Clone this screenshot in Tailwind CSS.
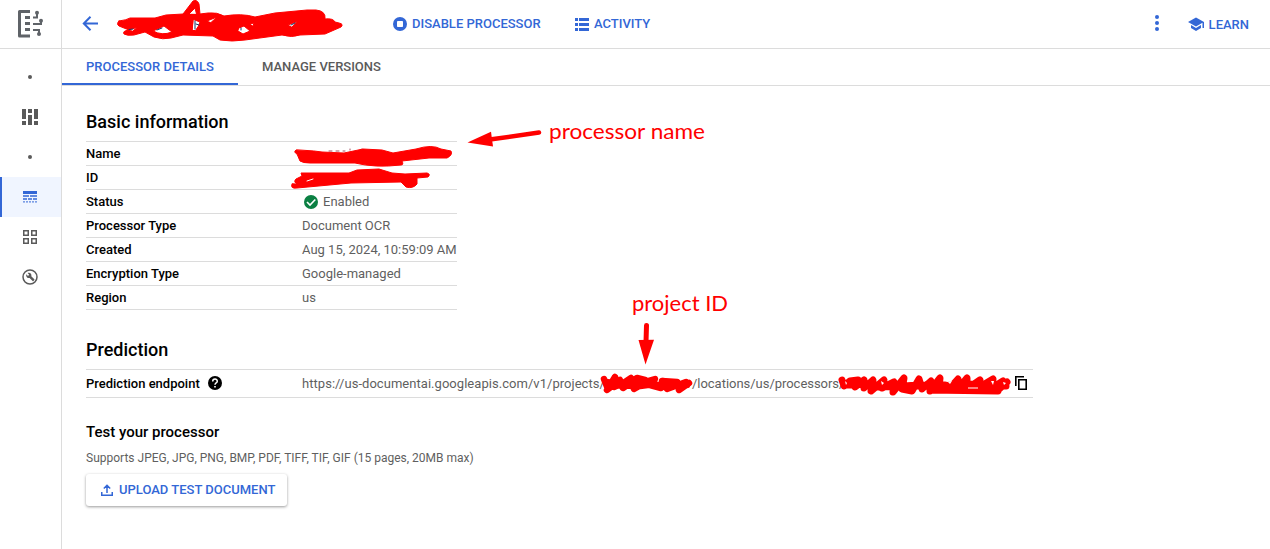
<!DOCTYPE html>
<html lang="en">
<head>
<meta charset="utf-8">
<title>Processor details</title>
<script src="https://cdn.jsdelivr.net/npm/@tailwindcss/browser@4"></script>
</head>
<body class="relative h-[549px] w-[1270px] overflow-hidden bg-white font-['Roboto',sans-serif] text-[13px] text-black">
<div class="flex h-full">
  <nav class="flex w-[62px] shrink-0 flex-col border-r border-[#dcdcdc]">
    <div class="flex h-[49px] shrink-0 items-center border-b border-[#dcdcdc] pl-[17px]">
      <svg class="h-[30px] w-[28px]" viewBox="17 9 28 30" fill="none" stroke="#5f6368"><path d="M30 11.5H19.500V36H30" stroke-width="3" stroke-linejoin="round"/><path d="M25 17.500h5M25 23.500h5M25 29.500h5" stroke-width="3"/><path d="M33 17.500h4v-5M33 24h8v-3M33 30h6v4" stroke-width="2"/><g fill="#5f6368" stroke="none"><circle cx="37" cy="12.800" r="2"/><circle cx="41" cy="20.800" r="2"/><circle cx="39" cy="34" r="2"/></g></svg>
    </div>
    <div class="flex flex-col pt-2">
      <div class="flex h-10 items-center justify-center pr-[1px]"><span class="size-1 rounded-full bg-[#5a5a5a]"></span></div>
      <div class="flex h-10 items-center justify-center pr-[1px]"><svg class="size-4" viewBox="0 0 16 16" fill="#5a5a5a"><path d="M0 0h4v10H0zM0 12h4v4H0zM6 0h4v4H6zM6 6h4v10H6zM12 0h4v10h-4zM12 12h4v4h-4z"/></svg></div>
      <div class="flex h-10 items-center justify-center pr-[1px]"><span class="size-1 rounded-full bg-[#5a5a5a]"></span></div>
      <div class="flex h-10 items-center justify-center border-l-2 border-[#3367d6] bg-[#f0f5ff] pr-[3px]"><svg class="h-3 w-[14px]" viewBox="0 0 14 12" fill="#3367d6"><path d="M0 0h14v3H0z"/><path d="M0 4.200h6v1.600H0zM7 4.200h7v1.600H7zM0 7.200h4v1.600H0zM5 7.200h4v1.600H5zM10 7.200h4v1.600h-4z"/><path d="M0 10.200h2v1.400H0zM3 10.200h2v1.400H3zM6 10.200h2v1.400H6zM9 10.200h2v1.400H9zM12 10.200h2v1.400h-2z" opacity=".8"/></svg></div>
      <div class="flex h-10 items-center justify-center pr-[1px]"><svg class="size-[14px]" viewBox="0 0 14 14" fill="none" stroke="#5a5a5a" stroke-width="1.500"><path d="M.75.750h4.500v4.500H.75zM8.750.750h4.500v4.500h-4.500zM.75 8.750h4.500v4.500H.75zM8.750 8.750h4.500v4.500h-4.500z"/></svg></div>
      <div class="flex h-10 items-center justify-center pr-[1px]"><svg class="size-4" viewBox="0 0 16 16"><circle cx="8" cy="8" r="7" fill="none" stroke="#5a5a5a" stroke-width="1.500"/><path fill="#5a5a5a" d="M4.300 5.300l1.700 1.600L7.200 5.700 5.600 4.100c1.300-.5 2.600-.2 3.300.7.600.8.700 1.600.4 2.500l3 3c.3.300.2.600 0 .8l-.8.800c-.3.300-.6.300-.9 0l-3-3c-.8.300-1.800.2-2.500-.5-.8-.8-1.100-2-.8-3.100z"/></svg></div>
    </div>
  </nav>
  <main class="flex min-w-0 flex-1 flex-col">
    <header class="flex h-[49px] shrink-0 items-center border-b border-[#dcdcdc] text-[13px] font-medium text-[#3367d6]">
      <svg class="ml-5 size-4" viewBox="0 0 16 16" fill="none" stroke="#3367d6" stroke-width="2"><path d="M16 7.500H2M8.500.800L1.800 7.500l6.700 6.700"/></svg>
      <svg class="ml-[295px] size-[14px]" viewBox="0 0 14 14"><circle cx="7" cy="7" r="7" fill="#3367d6"/><rect x="4" y="4" width="6" height="6" rx=".8" fill="#fff"/></svg>
      <span class="ml-[5px] w-[129px] whitespace-nowrap">DISABLE PROCESSOR</span>
      <svg class="ml-[34px] h-[13px] w-[14px]" viewBox="0 0 14 13" fill="#3367d6"><path d="M0 0h3v3H0zM4 0h10v3H4zM0 5h3v3H0zM4 5h10v3H4zM0 10h3v3H0zM4 10h10v3H4z"/></svg>
      <span class="ml-[5px] whitespace-nowrap">ACTIVITY</span>
      <svg class="mt-[-2px] ml-auto h-4 w-1" viewBox="0 0 4 16" fill="#3367d6"><circle cx="2" cy="2" r="2"/><circle cx="2" cy="8" r="2"/><circle cx="2" cy="14" r="2"/></svg>
      <svg class="ml-[29px] h-[14px] w-4" viewBox="0 0 16 14" fill="#3367d6"><path d="M8 .500L0 5l8 4.500 6.500-3.700V11H16V5z"/><path d="M3 8v3l5 3 5-3V8l-5 3z"/></svg>
      <span class="mr-[21px] ml-[5px] whitespace-nowrap pt-px">LEARN</span>
    </header>
    <div class="flex h-[37px] shrink-0 border-b border-[#dcdcdc] font-medium">
      <div class="-mb-px flex h-[36px] w-[176px] items-center justify-center border-b-2 border-[#3367d6] pt-[2px] text-[#3367d6]">PROCESSOR DETAILS</div>
      <div class="flex h-[36px] items-center pl-6 text-[#5a5a5a]">MANAGE VERSIONS</div>
    </div>
    <div class="pl-6">
      <h2 class="mt-6 h-[31px] text-[18px] leading-6 font-medium">Basic information</h2>
      <dl class="w-[371px] border-b border-[#dcdcdc] leading-[23px] text-[#5f5f5f] [&_dt]:w-[216px] [&_dt]:shrink-0 [&_dt]:font-medium [&_dt]:text-black [&_dd]:whitespace-nowrap">
        <div class="flex h-6 border-t border-[#dcdcdc]"><dt>Name</dt><dd></dd></div>
        <div class="flex h-6 border-t border-[#dcdcdc]"><dt>ID</dt><dd></dd></div>
        <div class="flex h-6 border-t border-[#dcdcdc]"><dt>Status</dt><dd class="flex items-center"><svg class="ml-[2px] mr-[5px] size-[14px]" viewBox="0 0 14 14"><circle cx="7" cy="7" r="7" fill="#0b8043"/><path d="M3 7l3 3 5.300-5.500" fill="none" stroke="#fff" stroke-width="1.600"/></svg>Enabled</dd></div>
        <div class="flex h-6 border-t border-[#dcdcdc]"><dt>Processor Type</dt><dd>Document OCR</dd></div>
        <div class="flex h-6 border-t border-[#dcdcdc]"><dt>Created</dt><dd>Aug 15, 2024, 10:59:09 AM</dd></div>
        <div class="flex h-6 border-t border-[#dcdcdc]"><dt>Encryption Type</dt><dd>Google-managed</dd></div>
        <div class="flex h-6 border-t border-[#dcdcdc]"><dt>Region</dt><dd>us</dd></div>
      </dl>
      <h2 class="mt-7 h-[31px] text-[18px] leading-6 font-medium">Prediction</h2>
      <div class="flex h-[29px] w-[947px] items-center border-y border-[#dcdcdc] whitespace-nowrap">
        <div class="flex w-[216px] shrink-0 items-center font-medium">Prediction endpoint<svg class="mb-px ml-2 size-[14px]" viewBox="0 0 14 14"><circle cx="7" cy="7" r="7" fill="#000"/><path d="M4.700 5.500C4.700 2.300 9.300 2.300 9.300 5.300c0 1.600-2.300 1.700-2.300 3.400" fill="none" stroke="#fff" stroke-width="1.500"/><path d="M6.200 10h1.600v1.500H6.200z" fill="#fff"/></svg></div>
        <div class="w-[390px] shrink-0 tracking-[0.04px] text-[#5f5f5f]">https://us-documentai.googleapis.com/v1/projects/</div>
        <div class="w-[323px] shrink-0 tracking-[-0.03px] text-[#5f5f5f]">/locations/us/processors/</div>
        <svg class="mb-px h-[14px] w-3 shrink-0" viewBox="0 0 12 14" fill="none" stroke="#000" stroke-width="1.600"><path d="M.8 10V.800H9M3.800 3.800h7.400v9.400H3.800z"/></svg>
      </div>
      <h3 class="mt-6 h-[26px] text-[15px] leading-5 font-medium">Test your processor</h3>
      <p class="h-[26px] text-[12px] leading-5 text-[#5f5f5f]">Supports JPEG, JPG, PNG, BMP, PDF, TIFF, TIF, GIF (15 pages, 20MB max)</p>
      <button class="flex h-[32px] w-[201px] items-center rounded-[3px] bg-white pl-[15px] font-medium whitespace-nowrap text-[#3367d6] shadow-[0_1px_3px_rgba(0,0,0,0.4)]"><svg class="mr-[6px] h-3 w-3" viewBox="0 0 12 12" fill="none" stroke="#3367d6" stroke-width="1.500"><path d="M.75 8v3.250h10.500V8M6 9V1.500M2.800 4.500L6 1.300l3.200 3.200"/></svg>UPLOAD TEST DOCUMENT</button>
    </div>
  </main>
</div>
<!-- Freehand redactions and annotations -->
<svg class="pointer-events-none absolute inset-0" width="1270" height="549" viewBox="0 0 1270 549" fill="#f00" stroke="#f00" stroke-linejoin="round" stroke-linecap="round">
  <path stroke-width="1" fill-rule="evenodd" d="M119 21Q116 24 119 26L124 28L129 30Q122 31 124 34Q127 36 134 35L145 32L154 37Q163 40 171 38L183 35L213 36L220 40Q232 42 245 40L282 35Q292 38 300 35L325 34L341 27Q344 24 339 23L335 22Q333 18 325 19Q326 11 316 10H307L275 13L255 17Q242 13 224 16Q217 12 208 13L200 14L199 4Q197-1 193 1L183 14L166 15L155 18L130 18Q127 20 119 21ZM189 14L195 8L196.500 14ZM193.500 19.500L200 22L198.500 26L195.500 30.500H192.500ZM153 31L164 26L172 32Q162 36 153 31ZM207 21L217 17L211 22.500ZM239 28L244 26L250 31L243 34L238 31ZM288 25L297 21.500L292 27ZM128 30L137 27.500L133 31ZM250 24L254 23L253 26Z"/>
  <path stroke="#17366b" stroke-width="1" fill="none" d="M157 30l5-2M195 21v8M196 24l3 1M241 28v2M291 25l4-2M129 29.500l4-.5"/>
  <path fill="none" stroke="#a55065" stroke-width="1" d="M329 151h3M336 151h3M343 151h2M350 149v1M362 149v2"/>
  <path d="M296 150Q293 152 297 154L300 161Q303 163 310 163L355 163Q375 168 401 165Q404 165 402 161L429 158L447 158Q453 155 451 151L441 149Q432 144 416 149L393 153L382 150L363 149L344 153L322 152L314 151Z"/>
  <path d="M292 184Q290 189 297 188L351 183L401 182L406 187Q413 189 417 184L417 178L428 177Q431 174 427 173L405 174L392 173L379 169L357 170L349 173H307L301 173L302 176L296 179Q293 182 297 184Z"/>
  <path d="M307 181L313 179" stroke="#fff" stroke-width="1"/>
  <path fill="none" stroke-width="4.500" d="M539 132.500L488 139.800"/><path stroke="none" d="M467.500 142.500L491 131.800L493 146.500Z"/>
  <path fill="none" stroke-width="5" d="M646.500 325.500L646 342"/><path stroke="none" d="M638.500 340L654 339.800L645.500 364.500Z"/>
  <path fill="none" stroke-width="6.500" d="M604 379L608 389L615 377L607 390L620 380L614 387L625 382L631 378L623 388L637 378L645 380L634 389L648 381L655 379L650 385L661 388L668 382L662 381L677 382L667 389L686 382L679 390L689 383M606 382L619 384L635 383L660 385L675 385L687 385M608 385L640 386L655 384"/>
  <path fill="none" stroke-width="7" d="M842 380L844 386L850 381L858 380L855 387L864 380L864 388L873 380L871 391L884 380L882 388L894 382L893 392L904 378L902 389L912 391L919 379L922 389L931 381L930 391L940 378L939 388L948 390L958 379L959 388L967 378L967 389L980 380L978 388L993 379L992 388L1003 381L999 389L1007 382M846 385L870 384L891 387L918 385L940 386L968 384L1006 386M876 387L910 386L945 385M930 390L998 391"/>
  <path stroke="none" fill="#fff" d="M845 381l2 2-1 2zM881 381l3 2-2 2zM948 382l4-1-2 3zM991 381l3 0-1 4zM1003 382l3 1-2 2zM968 387.500h10v1h-10z"/>
  <g stroke="none" font-family="Lato, sans-serif" font-size="20.500"><text x="549" y="139" textLength="156" lengthAdjust="spacingAndGlyphs">processor name</text><text x="632" y="310.500" textLength="96" lengthAdjust="spacingAndGlyphs">project ID</text></g>
</svg>
</body>
</html>
